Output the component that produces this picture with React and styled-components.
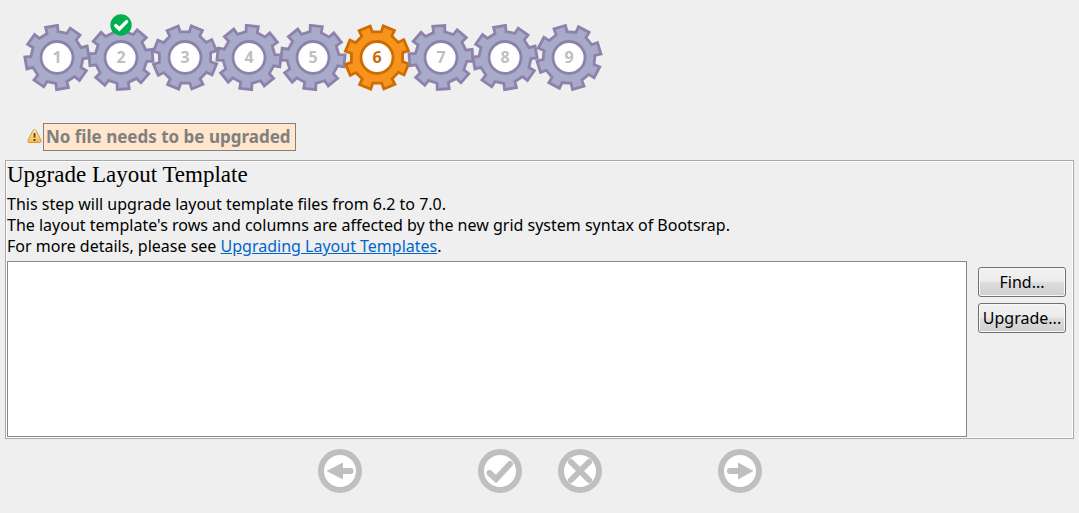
import React from 'react';
import styled, { createGlobalStyle } from 'styled-components';

const GlobalStyle = createGlobalStyle`
  *, *::before, *::after { box-sizing: border-box; }
  body {
    margin: 0;
    background: #efefef;
    color: #000;
    font-family: "Noto Sans", "Open Sans", sans-serif;
    font-size: 16px;
    line-height: 21px;
  }
`;

const Page = styled.main`
  display: flex;
  flex-direction: column;
  min-height: 100vh;
  padding: 24px 5px 20px;
`;

const Steps = styled.ol`
  display: flex;
  list-style: none;
  margin: 0;
  padding: 0 20px;
`;

const Step = styled.li`
  position: relative;
  display: flex;
  width: 64px;
  height: 67px;
`;

const GearDrawing = styled.svg`
  display: block;
  width: 64px;
  height: 67px;
  overflow: visible;
`;

const GearBody = styled.path`
  fill: ${(p) => (p.$active ? '#f7941d' : '#a8aaca')};
  stroke: ${(p) => (p.$active ? '#ce6c00' : '#8c82ab')};
  stroke-width: 2.8;
`;

const GearHub = styled.circle`
  fill: #fff;
  stroke: ${(p) => (p.$active ? '#ce6c00' : '#8c82ab')};
  stroke-width: 2.8;
`;

const GearNumber = styled.text`
  font-size: 16px;
  font-weight: 700;
  text-anchor: middle;
  fill: ${(p) => (p.$active ? '#c86c0a' : '#bfbfbf')};
`;

const DoneBadge = styled.svg`
  position: absolute;
  top: -10px;
  left: 21px;
  width: 22px;
  height: 22px;
  z-index: 1;
`;

const Notice = styled.div`
  display: flex;
  align-items: center;
  gap: 1px;
  margin-top: 32px;
  padding-left: 22px;
`;

const WarningIcon = styled.svg`
  width: 15px;
  height: 16px;
  margin-bottom: 3px;
`;

const NoticeText = styled.p`
  margin: 0;
  padding: 0 4px 0 2px;
  border: 1px solid #808080;
  background: #ffe6cc;
  color: #808080;
  font-size: 17px;
  font-weight: 700;
  line-height: 26px;
`;

const Panel = styled.section`
  display: flex;
  flex: 1;
  flex-direction: column;
  margin-top: 9px;
  padding: 1px;
  border: 1px solid #a8a8ac;
  box-shadow: inset 0 0 0 1px #fff;
`;

const Title = styled.h1`
  margin: 0;
  font-family: "Liberation Serif", serif;
  font-size: 23px;
  font-weight: 400;
  line-height: 26px;
`;

const Description = styled.p`
  margin: 6px 0 4px;
`;

const DocLink = styled.a`
  color: #0066cc;
  text-decoration: underline;
`;

const Workspace = styled.div`
  display: flex;
  flex: 1;
  gap: 11px;
  padding-right: 6px;
`;

const FileList = styled.select`
  flex: 1;
  min-width: 0;
  min-height: 176px;
  margin: 0;
  padding: 0;
  appearance: none;
  border: 1px solid #828790;
  border-radius: 0;
  background: #fff;
  outline: none;
`;

const Actions = styled.div`
  display: flex;
  flex-direction: column;
  gap: 6px;
  padding-top: 6px;
`;

const ActionButton = styled.button`
  width: 88px;
  height: 30px;
  padding: 0;
  border: 1px solid #707070;
  border-radius: 3px;
  background: linear-gradient(#f2f2f2, #ebebeb 50%, #dddddd 50%, #cfcfcf);
  box-shadow: inset 0 0 0 1px #f8f8f8;
  color: #000;
  font: inherit;
`;

const Navigation = styled.nav`
  display: flex;
  justify-content: center;
  gap: 116px;
  margin-top: 10px;
`;

const NavGroup = styled.div`
  display: flex;
  gap: 36px;
`;

const RoundButton = styled.button`
  width: 44px;
  height: 44px;
  padding: 0;
  border: 0;
  border-radius: 50%;
  background: none;
`;

const RoundDrawing = styled.svg`
  display: block;
  width: 44px;
  height: 44px;
`;

const point = (radius, degrees) => {
  const a = (degrees * Math.PI) / 180;
  return `${(radius * Math.sin(a)).toFixed(2)} ${(-radius * Math.cos(a)).toFixed(2)}`;
};

const gearPath = `M${Array.from({ length: 8 }, (_, i) => {
  const a = i * 45;
  return [point(26, a - 12.5), point(32.2, a - 10.8), point(32.2, a + 10.8), point(26, a + 12.5)].join('L');
}).join('L')}Z`;

const steps = [
  { number: 1, turn: -10 },
  { number: 2, turn: -4, done: true },
  { number: 3, turn: 22 },
  { number: 4, turn: 6 },
  { number: 5, turn: 6 },
  { number: 6, turn: 22, active: true },
  { number: 7, turn: -4 },
  { number: 8, turn: -10 },
  { number: 9, turn: 28 },
];

function Gear({ number, turn, active, done }) {
  return (
    <Step aria-current={active ? 'step' : undefined}>
      <GearDrawing viewBox="-32 -33.5 64 67">
        <GearBody $active={active} d={gearPath} transform={`rotate(${turn})`} />
        <GearHub $active={active} r="16" />
        <GearNumber $active={active} y="5">{number}</GearNumber>
      </GearDrawing>
      {done && (
        <DoneBadge viewBox="0 0 22 22" role="img" aria-label="Done">
          <circle cx="11" cy="11" r="10.7" fill="#00b050" />
          <path d="M5.7 11.6 9.3 15 16.6 7.6" fill="none" stroke="#fff" strokeWidth="3.4" strokeLinecap="round" />
        </DoneBadge>
      )}
    </Step>
  );
}

function NavButton({ label, children }) {
  return (
    <RoundButton type="button" aria-label={label}>
      <RoundDrawing viewBox="0 0 44 44">
        <circle cx="22" cy="22" r="19" fill="#fff" stroke="#bfbfbf" strokeWidth="6" />
        {children}
      </RoundDrawing>
    </RoundButton>
  );
}

const stroke = { fill: 'none', stroke: '#bfbfbf', strokeWidth: 6, strokeLinecap: 'round' };

export default function App() {
  return (
    <>
      <GlobalStyle />
      <Page>
        <Steps>
          {steps.map((s) => (
            <Gear key={s.number} {...s} />
          ))}
        </Steps>
        <Notice role="status">
          <WarningIcon viewBox="0 0 15 16" aria-hidden="true">
            <defs>
              <linearGradient id="amber" x1="0" y1="0" x2="0" y2="1">
                <stop offset="0" stopColor="#fff0c0" />
                <stop offset="1" stopColor="#f5b840" />
              </linearGradient>
            </defs>
            <path d="M7.5 1.5C8.4 1.5 8.8 2 9.2 2.8L14 12.2C14.5 13.4 14 14.5 12.8 14.5H2.2C1 14.5.5 13.4 1 12.2L5.8 2.8C6.2 2 6.6 1.5 7.5 1.5Z" fill="url(#amber)" stroke="#d29a50" />
            <path d="M7.5 5V9.6M7.5 11V13" stroke="#5c4210" strokeWidth="1.8" />
          </WarningIcon>
          <NoticeText>No file needs to be upgraded</NoticeText>
        </Notice>
        <Panel>
          <Title>Upgrade Layout Template</Title>
          <Description>
            This step will upgrade layout template files from 6.2 to 7.0.
            <br />
            The layout template's rows and columns are affected by the new grid system syntax of Bootsrap.
            <br />
            For more details, please see <DocLink href="#upgrading">Upgrading Layout Templates</DocLink>.
          </Description>
          <Workspace>
            <FileList multiple aria-label="Layout template files" />
            <Actions>
              <ActionButton type="button">Find...</ActionButton>
              <ActionButton type="button">Upgrade...</ActionButton>
            </Actions>
          </Workspace>
        </Panel>
        <Navigation aria-label="Steps">
          <NavButton label="Previous">
            <path d="M8.5 22 25 13.5V30.5Z" fill="#bfbfbf" />
            <path d="M24 22H32.5" {...stroke} />
          </NavButton>
          <NavGroup>
            <NavButton label="Complete">
              <path d="M11.5 24 18 30 32 15" {...stroke} />
            </NavButton>
            <NavButton label="Skip">
              <path d="M13 13 31 31M31 13 13 31" {...stroke} />
            </NavButton>
          </NavGroup>
          <NavButton label="Next">
            <path d="M35.5 22 20 13.5V30.5Z" fill="#bfbfbf" />
            <path d="M12 22H20" {...stroke} />
          </NavButton>
        </Navigation>
      </Page>
    </>
  );
}
